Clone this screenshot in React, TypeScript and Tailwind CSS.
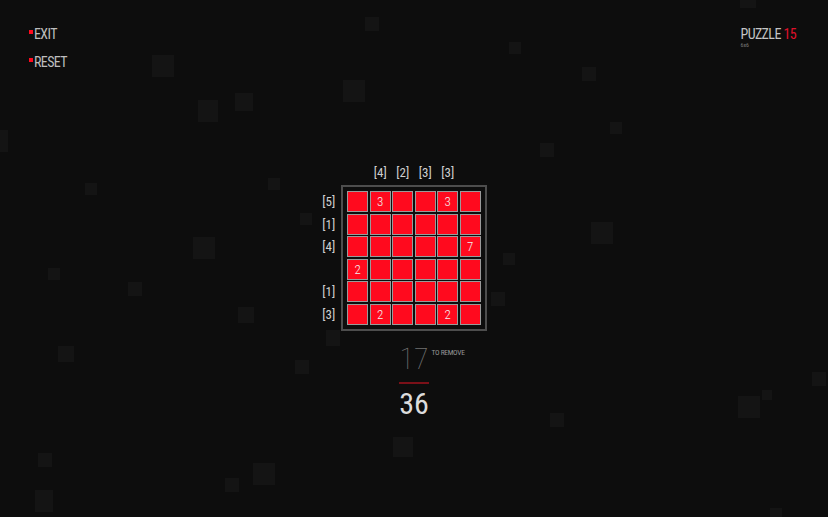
const FONT = "font-['Liberation_Sans_Narrow','Roboto_Condensed',Roboto,sans-serif]";

const bgSquares = [
  { x: 365, y: 17, w: 14, h: 14 },
  { x: 509, y: 42, w: 12, h: 12 },
  { x: 152, y: 55, w: 22, h: 22 },
  { x: 582, y: 67, w: 14, h: 14 },
  { x: 343, y: 80, w: 22, h: 22 },
  { x: 235, y: 93, w: 18, h: 18 },
  { x: 198, y: 100, w: 20, h: 22 },
  { x: 610, y: 122, w: 12, h: 12 },
  { x: 0, y: 130, w: 8, h: 22 },
  { x: 540, y: 143, w: 14, h: 14 },
  { x: 85, y: 183, w: 12, h: 12 },
  { x: 268, y: 178, w: 12, h: 12 },
  { x: 591, y: 222, w: 22, h: 22 },
  { x: 193, y: 237, w: 22, h: 22 },
  { x: 300, y: 213, w: 12, h: 12 },
  { x: 503, y: 253, w: 12, h: 12 },
  { x: 48, y: 268, w: 12, h: 12 },
  { x: 128, y: 282, w: 14, h: 14 },
  { x: 491, y: 292, w: 14, h: 14 },
  { x: 238, y: 307, w: 16, h: 16 },
  { x: 326, y: 330, w: 14, h: 16 },
  { x: 58, y: 346, w: 16, h: 16 },
  { x: 295, y: 360, w: 14, h: 14 },
  { x: 812, y: 372, w: 14, h: 14 },
  { x: 762, y: 390, w: 10, h: 10 },
  { x: 738, y: 396, w: 22, h: 22 },
  { x: 550, y: 413, w: 14, h: 14 },
  { x: 393, y: 437, w: 20, h: 20 },
  { x: 38, y: 453, w: 14, h: 14 },
  { x: 253, y: 463, w: 22, h: 22 },
  { x: 225, y: 478, w: 14, h: 14 },
  { x: 35, y: 490, w: 18, h: 22 },
  { x: 770, y: 508, w: 12, h: 9 },
  { x: 740, y: 0, w: 16, h: 8 },
];

const colHints = ['', '[4]', '[2]', '[3]', '[3]', ''];
const rowHints = ['[5]', '[1]', '[4]', '', '[1]', '[3]'];

// numbers shown inside cells, keyed by "row-col"
const cellNumbers: Record<string, string> = {
  '0-1': '3',
  '0-4': '3',
  '2-5': '7',
  '3-0': '2',
  '5-1': '2',
  '5-4': '2',
};

function MenuItem({ label }: { label: string }) {
  return (
    <div className="flex items-start">
      <span className="mt-[4px] w-[4px] h-[4px] bg-[#ff0a1e]" />
      <span className="text-[14px] leading-[16px] tracking-[-0.6px] text-[#bdbdbd] ml-[1px]">{label}</span>
    </div>
  );
}

function Cell({ value }: { value?: string }) {
  return (
    <div className="w-[21px] h-[21px] bg-[#ff0a1e] border border-[#9a9a9a] flex items-center justify-center text-[13px] leading-none font-light text-[#f2f2f2]">
      {value}
    </div>
  );
}

function Board() {
  return (
    <div className="flex flex-col items-center">
      <div className="flex">
        <div className="w-[26px]" />
        <div className="px-[6px]">
          <div className="flex gap-[1.5px] h-[13px] mb-[6px]">
            {colHints.map((h, i) => (
              <div key={i} className="w-[21px] text-center text-[13px] leading-[13px] text-[#d0d0d0]">
                {h}
              </div>
            ))}
          </div>
        </div>
        <div className="w-[26px]" />
      </div>
      <div className="flex">
        <div className="w-[26px] pt-[6px] pr-[6px] flex flex-col gap-[1.5px]">
          {rowHints.map((h, i) => (
            <div key={i} className="h-[21px] flex items-center justify-end text-[13px] leading-none text-[#d0d0d0]">
              {h}
            </div>
          ))}
        </div>
        <div className="border-2 border-[#4d4d4d] p-[4px] flex flex-col gap-[1.5px]">
          {[0, 1, 2, 3, 4, 5].map((r) => (
            <div key={r} className="flex gap-[1.5px]">
              {[0, 1, 2, 3, 4, 5].map((c) => (
                <Cell key={c} value={cellNumbers[`${r}-${c}`]} />
              ))}
            </div>
          ))}
        </div>
        <div className="w-[26px]" />
      </div>
    </div>
  );
}

export default function App() {
  return (
    <div className={`relative w-[828px] h-[517px] overflow-hidden bg-[#0d0d0d] ${FONT}`}>
      {bgSquares.map((s, i) => (
        <div
          key={i}
          className="absolute bg-[#141414]"
          style={{ left: s.x, top: s.y, width: s.w, height: s.h }}
        />
      ))}

      <div className="relative flex flex-col">
        <div className="flex justify-between pt-[26px] pl-[29px] pr-[32px]">
          <div className="flex flex-col gap-[12px]">
            <MenuItem label="EXIT" />
            <MenuItem label="RESET" />
          </div>
          <div className="flex flex-col">
            <div className="text-[14px] leading-[16px] tracking-[-0.6px] text-[#c4c4c4]">
              PUZZLE <span className="text-[#e0102a]">15</span>
            </div>
            <div className="text-[6px] leading-[6px] text-[#7a7a7a]">6x6</div>
          </div>
        </div>

        <div className="mt-[96px]">
          <Board />
        </div>

        <div className="flex flex-col items-center mt-[13px]">
          <div className="relative">
            <span className="text-[30px] leading-[30px] font-thin text-[#737373]">17</span>
            <span className="absolute left-full top-[5px] ml-[3px] whitespace-nowrap text-[7.5px] leading-[8px] tracking-[-0.3px] text-[#959595]">
              TO REMOVE
            </span>
          </div>
          <div className="mt-[6px] w-[30px] h-[2px] bg-[#7a1018]" />
          <div className="mt-[5px] text-[30px] leading-[30px] text-[#dcdcdc]">36</div>
        </div>
      </div>
    </div>
  );
}
